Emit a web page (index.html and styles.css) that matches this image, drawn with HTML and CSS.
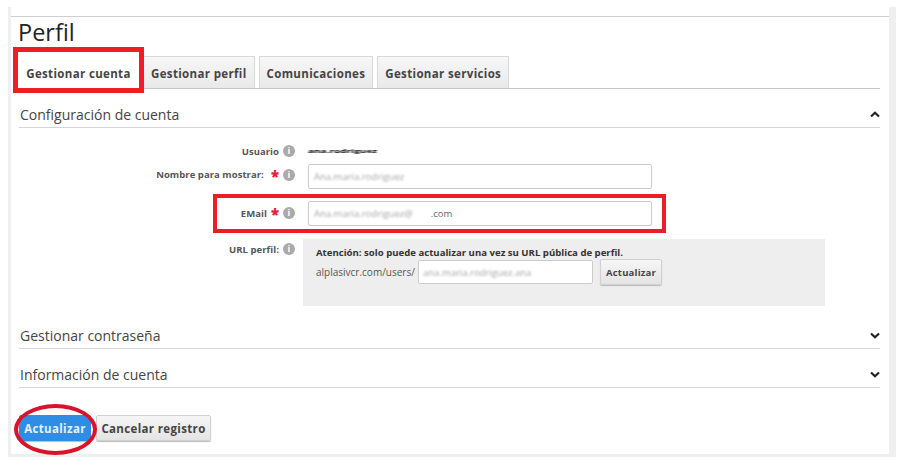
FILE: index.html
```html
<!DOCTYPE html>
<html lang="es">
<head>
<meta charset="utf-8">
<title>Perfil</title>
<link rel="stylesheet" href="styles.css">
</head>
<body>
<main class="panel">
  <h1 class="title">Perfil</h1>
  <nav class="tabs">
    <a class="tab active">Gestionar cuenta</a>
    <a class="tab">Gestionar perfil</a>
    <a class="tab">Comunicaciones</a>
    <a class="tab">Gestionar servicios</a>
  </nav>

  <section class="section">
    <header class="section-head">
      <span>Configuración de cuenta</span>
      <svg class="chev" viewBox="0 0 10 7"><path d="M1 5.5 5 1.8 9 5.5"/></svg>
    </header>
    <div class="form">
      <div class="row row-user">
        <div class="label">Usuario <i class="info">i</i></div>
        <div class="user-value">ana.rodriguez</div>
      </div>
      <div class="row row-name">
        <div class="label">Nombre para mostrar: <b class="req">*</b> <i class="info">i</i></div>
        <div class="input wide"><span class="blur">Ana.maria.rodriguez</span></div>
      </div>
      <div class="row row-mail">
        <div class="label">EMail <b class="req">*</b> <i class="info">i</i></div>
        <div class="input wide"><span class="blur">Ana.maria.rodriguez@</span><span class="blur-end">.com</span></div>
      </div>
      <div class="row row-url">
        <div class="label">URL perfil: <i class="info">i</i></div>
        <div class="notice">
          <p class="notice-text">Atención: solo puede actualizar una vez su URL pública de perfil.</p>
          <div class="notice-row">
            <span class="url-prefix">alplasivcr.com/users/</span>
            <div class="input short"><span class="blur">ana.maria.rodriguez.ana</span></div>
            <button class="btn small">Actualizar</button>
          </div>
        </div>
      </div>
    </div>
  </section>

  <section class="section">
    <header class="section-head">
      <span>Gestionar contraseña</span>
      <svg class="chev" viewBox="0 0 10 7"><path d="M1 1.5 5 5.2 9 1.5"/></svg>
    </header>
  </section>
  <section class="section">
    <header class="section-head">
      <span>Información de cuenta</span>
      <svg class="chev" viewBox="0 0 10 7"><path d="M1 1.5 5 5.2 9 1.5"/></svg>
    </header>
  </section>

  <div class="actions">
    <button class="btn primary">Actualizar</button>
    <button class="btn">Cancelar registro</button>
  </div>
</main>

<div class="mark mark-tab"></div>
<div class="mark mark-mail"></div>
<div class="mark mark-btn"></div>
</body>
</html>
```

FILE: styles.css
```css
* { box-sizing: border-box; }
html, body { margin: 0; padding: 0; background: #fff; }
body {
  width: 918px;
  height: 472px;
  overflow: hidden;
  position: relative;
  padding: 7px 0 0 8px;
  font-family: "Open Sans", "Liberation Sans", sans-serif;
  color: #333;
}
.panel {
  width: 888px;
  height: 450px;
  padding: 0 8px 0 8px;
  border-left: 3px solid #efefef;
  border-right: 7px solid #efefef;
  border-bottom: 3px solid #efefef;
  background: linear-gradient(#cfcfcf, #cfcfcf) no-repeat 0 9px / 100% 1px;
}
.title {
  margin: 0 0 0 -1px;
  padding-top: 11px;
  font-size: 23.5px;
  font-weight: 400;
  line-height: 28px;
  height: 49px;
  color: #222;
}
.tabs {
  display: flex;
  gap: 4px;
  height: 33px;
  margin-left: -1px;
  border-bottom: 1px solid #c9c9c9;
  width: 862px;
}
.tab {
  display: flex;
  align-items: center;
  justify-content: center;
  height: 32px;
  padding: 1px 7px 0;
  font-size: 11.5px;
  font-weight: 700;
  letter-spacing: .35px;
  white-space: nowrap;
  color: #444;
  background: linear-gradient(#f7f7f7, #e9e9e9);
  border: 1px solid #d8d8d8;
  border-bottom: 0;
}
.tab.active {
  background: #fff;
  border-color: transparent;
  width: 121px;
  padding: 1px 0 0;
}
.section-head {
  display: flex;
  justify-content: space-between;
  align-items: center;
  width: 861px;
  height: 39px;
  padding: 17px 0 5px 1px;
  border-bottom: 1px solid #d5d5d5;
  font-size: 14px;
  color: #444;
}
.chev { width: 10px; height: 7px; flex: none; }
.chev path { fill: none; stroke: #222; stroke-width: 2.2; }

.form { height: 182px; padding-top: 16px; }
.row { display: flex; margin-left: -19px; }
.label {
  width: 295px;
  flex: none;
  display: flex;
  justify-content: flex-end;
  align-items: center;
  gap: 4px;
  height: 24px;
  font-size: 9.5px;
  font-weight: 700;
  letter-spacing: .05px;
  color: #555;
}
.info {
  width: 12px;
  height: 12px;
  border-radius: 50%;
  background: #aaa;
  color: #fff;
  font-style: normal;
  font-size: 9px;
  line-height: 12px;
  text-align: center;
  font-weight: 700;
  flex: none;
}
.req { color: #e0203a; font-size: 15px; line-height: 12px; height: 10px; }
.row-user { height: 20px; }
.row-name { height: 37px; }
.row-mail { height: 38px; }
.row-user .label { height: 14px; }
.row-name .label { height: 21px; }
.row-name .req { margin-left: 3px; }
.row-url .label { height: 20px; }
.user-value {
  margin-left: 13px;
  height: 14px;
  font-size: 10px;
  line-height: 14px;
  font-weight: 700;
  color: #000;
  filter: blur(.8px);
  transform: scaleY(.55);
}
.input {
  display: flex;
  align-items: center;
  height: 25px;
  background: #fff;
  border: 1px solid #ccc;
  border-radius: 2px;
  padding: 0 5px;
  font-size: 9.5px;
  color: #555;
}
.wide { width: 344px; margin-left: 13px; }
.short { width: 175px; height: 24px; padding: 0 4px; }
.blur { filter: blur(1px); opacity: .55; }
.blur-end { margin-left: 18px; color: #666; }
.notice {
  width: 522px;
  height: 67px;
  margin-left: 8px;
  padding: 7px 13px;
  background: #eee;
}
.notice-text {
  margin: 0;
  font-size: 9.6px;
  line-height: 14px;
  font-weight: 700;
  color: #333;
}
.notice-row { display: flex; align-items: center; margin-top: -1px; }
.url-prefix { width: 102px; flex: none; font-size: 10px; white-space: nowrap; color: #555; }
.btn {
  font-family: inherit;
  font-weight: 700;
  font-size: 11.5px;
  letter-spacing: .35px;
  color: #444;
  height: 26px;
  padding: 0 5px;
  background: linear-gradient(#f6f6f6, #e4e4e4);
  border: 1px solid #d0d0d0;
  border-radius: 2px;
  box-shadow: 0 1px 1px #bbb;
}
.btn.small { font-size: 9.5px; letter-spacing: .2px; margin-left: 7px; width: 62px; padding: 0; }
.actions { display: flex; gap: 5px; margin-top: 27px; }
.actions .btn { width: 115px; padding: 0; }
.actions .btn.primary {
  width: 72px;
  color: #e6f0fa;
  background: #2f8ee4;
  border-color: #2f8ee4;
}

.mark { position: absolute; pointer-events: none; }
.mark-tab { left: 13px; top: 47px; width: 131px; height: 46px; border: 5px solid #ee1c25; }
.mark-mail { left: 213px; top: 194px; width: 453px; height: 39px; border: 4px solid #ee1c25; }
.mark-btn { left: 14px; top: 404px; width: 83px; height: 51px; border: 4px solid #d9132a; border-radius: 50%; }
```
